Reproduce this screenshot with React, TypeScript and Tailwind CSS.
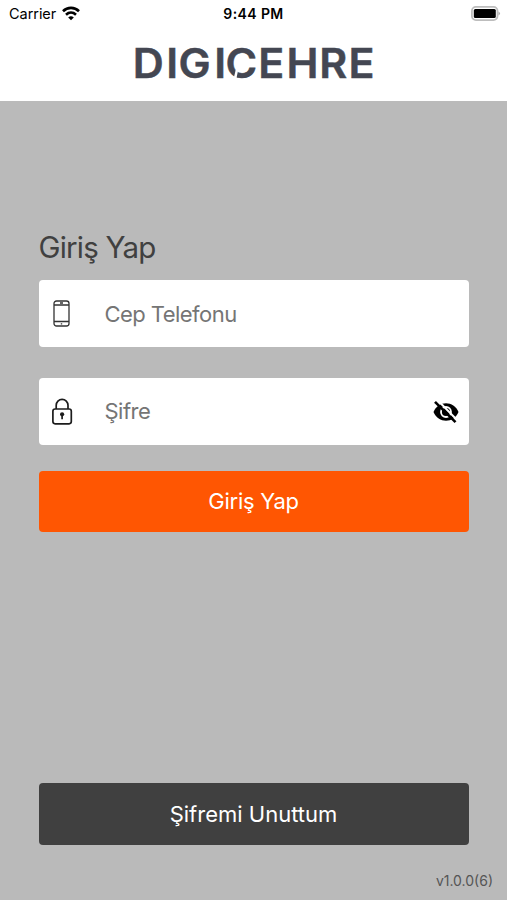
function Logo() {
  return (
    <svg className="h-12 w-[260px] overflow-visible" viewBox="123.5 40 260 48" role="img" aria-label="DIGICEHRE">
      <g fill="#444752" stroke="#444752" strokeWidth=".5" className="font-['Inter'] text-[40.5px] font-semibold">
        <text transform="scale(1.06 1)" y="78.3" x="124.7 156.3 167.9 201.6 212.3 243.1 269.8 300.7 328.2">DIGICEHRE</text>
      </g>
      <path d="M238.5 66 L235.2 70 L232.8 80 L235.6 80 Z" fill="#fff" />
    </svg>
  );
}

function StatusBar() {
  return (
    <div className="grid h-7 grid-cols-3 items-center pl-[9px] pr-[6px] text-black">
      <div className="flex items-center gap-[6px] text-[14.5px] leading-none">
        <span className="tracking-[-0.05px]">Carrier</span>
        <svg className="-mt-[2px] h-[15px] w-[18px]" viewBox="0 0 18 15" fill="none" stroke="#000" strokeWidth="2.6">
          <path d="M1 5.2C5.5 .8 12.5 .8 17 5.2M4 8.7c3-2.8 7-2.8 10 0" />
          <path d="M9 14.2 6.2 11.4Q9 9.2 11.8 11.4Z" fill="#000" stroke="none" />
        </svg>
      </div>
      <span className="-ml-[3px] text-center text-[14px] font-semibold leading-none tracking-[0.4px]">9:44 PM</span>
      <svg className="-mt-[2px] h-[15px] w-[30px] justify-self-end" viewBox="0 0 30 15">
        <rect x=".9" y=".9" width="25.6" height="13.2" rx="4" fill="#fff" stroke="#bdbdbd" strokeWidth="1.8" />
        <rect x="2.8" y="3" width="22" height="9" rx="1.5" />
        <path d="M27.5 5.5q3 2 0 4Z" fill="#aaa" />
      </svg>
    </div>
  );
}

function PhoneIcon() {
  return (
    <svg className="h-[27px] w-[18px]" viewBox="0 0 18 27" fill="none" stroke="#333" strokeWidth="1.3">
      <rect x="1" y="1" width="15" height="25" rx="2.5" />
      <path d="M1 5h15M1 21.5h15M7 3h3M7.8 23.8h1.4" />
    </svg>
  );
}

function LockIcon() {
  return (
    <svg className="h-[27px] w-[22px]" viewBox="0 0 22 27" fill="none" stroke="#1c1c1c" strokeWidth="1.7">
      <rect x=".9" y="11" width="18.4" height="14.8" rx="2.2" />
      <path d="M4.2 11V7.2a5.9 5.9 0 0 1 11.8 0V11" />
      <circle cx="10.1" cy="16.3" r="2.1" fill="#1c1c1c" stroke="none" />
      <path d="M10.1 16.3v5" />
    </svg>
  );
}

function EyeOffIcon() {
  return (
    <svg className="h-[24px] w-[28px]" viewBox="0 0 28 24">
      <path d="M1.5 12C6 .4 22 .4 26.5 12 22 23.6 6 23.6 1.5 12Z" />
      <circle cx="14" cy="12" r="5" fill="none" stroke="#fff" strokeWidth="1.8" />
      <path d="m5.5 0 20 20.5" stroke="#fff" strokeWidth="2" />
      <path d="m3 1.8 20.5 20.4" stroke="#000" strokeWidth="2.6" />
    </svg>
  );
}

export default function App() {
  return (
    <div className="flex h-[900px] w-[507px] flex-col bg-[#bababa] font-['Inter',sans-serif]">
      <header className="flex h-[101px] flex-col bg-white">
        <StatusBar />
        <div className="mt-3 flex justify-center"><Logo /></div>
      </header>
      <main className="flex flex-1 flex-col px-[38.5px] pt-[126px]">
        <h1 className="text-[29.5px] font-normal leading-10 tracking-[-0.8px] text-[#404040]">Giriş Yap</h1>
        <label className="mt-[13px] flex h-[67px] items-center rounded bg-white pl-[14px]">
          <PhoneIcon />
          <span className="ml-[34px] mt-px text-[22px] tracking-[-0.55px] text-[#757575]">Cep Telefonu</span>
        </label>
        <label className="mt-[31px] flex h-[67px] items-center rounded bg-white pl-[13px] pr-[9px]">
          <LockIcon />
          <span className="ml-[31px] flex-1 text-[22px] tracking-[-0.5px] text-[#757575]">Şifre</span>
          <EyeOffIcon />
        </label>
        <button className="mt-[26px] h-[61px] rounded bg-[#ff5602] text-[22px] tracking-[-0.25px] text-white">Giriş Yap</button>
        <button className="mt-auto h-[62px] rounded bg-[#404040] pt-px text-[22px] text-white">Şifremi Unuttum</button>
      </main>
      <footer className="flex h-[55px] items-end justify-end pb-[9px] pr-[14px] text-[14px] leading-5 text-[#555]">v1.0.0(6)</footer>
    </div>
  );
}
